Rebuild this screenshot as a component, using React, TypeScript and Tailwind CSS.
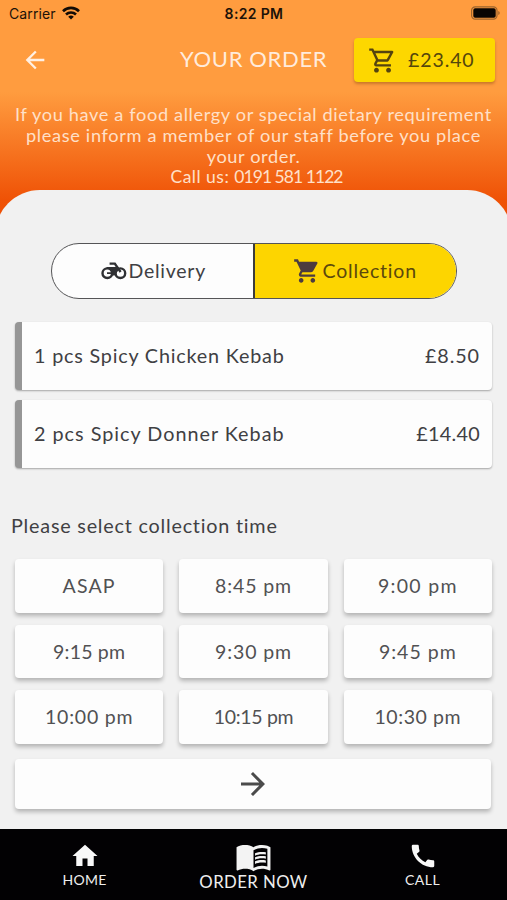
import type { ReactNode } from 'react';
import {
  MdArrowBack,
  MdArrowForward,
  MdCall,
  MdMenuBook,
  MdOutlineShoppingCart,
  MdShoppingCart,
} from 'react-icons/md';

const items = [
  { name: '1 pcs Spicy Chicken Kebab', price: '£8.50', nameSpacing: 'tracking-[0.8px]', priceSpacing: 'tracking-[0.9px]' },
  { name: '2 pcs Spicy Donner Kebab', price: '£14.40', nameSpacing: 'tracking-[1px]', priceSpacing: 'tracking-[0.3px]' },
];

const times = [
  { label: 'ASAP', spacing: 'tracking-[1.2px]' },
  { label: '8:45 pm', spacing: 'tracking-[0.9px]' },
  { label: '9:00 pm', spacing: 'tracking-[1.3px]' },
  { label: '9:15 pm', spacing: 'tracking-[0.2px]' },
  { label: '9:30 pm', spacing: 'tracking-[0.9px]' },
  { label: '9:45 pm', spacing: 'tracking-[1px]' },
  { label: '10:00 pm', spacing: 'tracking-[0.8px]' },
  { label: '10:15 pm', spacing: 'tracking-[-0.3px]' },
  { label: '10:30 pm', spacing: 'tracking-[0.6px]' },
];

function StatusBar() {
  return (
    <div className="flex h-7 items-center justify-between pr-[6px] pb-[2px] pl-[9px] font-['Inter',sans-serif] text-[14px] text-[#1c1208]">
      <div className="flex w-40 items-center gap-[6px]">
        <span className="tracking-[0.1px]">Carrier</span>
        <svg width="18" height="14" viewBox="0 0 18 14" fill="none" stroke="#120b05" strokeWidth="2.6">
          <path d="M1 5.2a11.4 11.4 0 0 1 16 0" />
          <path d="M4 8.5a7.2 7.2 0 0 1 10 0" />
          <path d="M9 13.6 6.2 10.8a4 4 0 0 1 5.6 0Z" fill="#120b05" stroke="none" />
        </svg>
      </div>
      <span className="-ml-[2px] font-semibold tracking-[0.35px]">8:22 PM</span>
      <div className="flex w-40 justify-end">
        <svg width="31" height="14" viewBox="0 0 31 14">
          <rect x="1.6" y="0.8" width="25.4" height="12.4" rx="3.6" fill="none" stroke="#9b632c" strokeWidth="1.2" />
          <rect x="3.3" y="2.3" width="22.4" height="9.4" rx="1.8" fill="#080503" />
          <path d="M28.4 5v4c1.6-.6 1.6-3.4 0-4Z" fill="#8f5a28" />
        </svg>
      </div>
    </div>
  );
}

function Motorcycle() {
  return (
    <svg width="26" height="18" viewBox="0 0 26 18" fill="none" stroke="#2f3033">
      <circle cx="6.3" cy="11.2" r="4.8" strokeWidth="2.4" />
      <circle cx="19.4" cy="11.2" r="4.8" strokeWidth="2.4" />
      <path d="M8.6 1.6h5.2l5.8 8.4" strokeWidth="2.4" />
      <path d="M5.6 5h11.2l1.4 2.2-4.6 6.4h-3.1c.4-3.6-1.2-6.4-4.9-7.4Z" fill="#2f3033" stroke="none" />
      <path d="M6 11.2h5.6" strokeWidth="1.8" />
    </svg>
  );
}

function HomeGlyph() {
  return (
    <svg width="30" height="30" viewBox="0 0 24 24" fill="#f8f8f8">
      <path d="M10 20v-6h4v6h5v-8h3L12 3 2 12h3v8z" />
    </svg>
  );
}

function NavItem({ icon, children, className }: { icon: ReactNode; children: ReactNode; className: string }) {
  return (
    <div className={`flex flex-col items-center text-[#eeeeee] ${className}`}>
      {icon}
      {children}
    </div>
  );
}

export default function App() {
  return (
    <div className="flex h-[900px] w-[507px] flex-col overflow-hidden bg-[#f1f1f1] font-['Lato',sans-serif] text-[#404043]">
      <header className="h-[240px] shrink-0 bg-[linear-gradient(180deg,#ff9c3f_0px,#ff9c3f_92px,#ef5206_200px,#ec4c02_240px)]">
        <StatusBar />
        <div className="flex h-[64px] items-center pr-3 pl-[21px]">
          <MdArrowBack size={28} color="#fff0e4" />
          <h1 className="-mt-[3px] ml-[131px] w-[160px] text-[22px] tracking-[0.65px] whitespace-nowrap text-[#ffebdc]">YOUR ORDER</h1>
          <button className="ml-auto flex h-11 w-[141px] items-center rounded-[4px] bg-[#fdd700] pl-[14px] text-[19.5px] tracking-[0.9px] text-[#55460c] shadow-[0_2px_3px_rgba(100,50,0,0.35)]">
            <MdOutlineShoppingCart size={29} color="#54430f" />
            <span className="-mt-px ml-[11px]">£23.40</span>
          </button>
        </div>
        <p className="mt-[12px] text-center text-[18.2px] leading-[20.8px] whitespace-nowrap text-[#ffe0c8]">
          <span className="tracking-[0.63px]">If you have a food allergy or special dietary requirement</span><br />
          <span className="tracking-[0.66px]">please inform a member of our staff before you place</span><br />
          <span className="tracking-[0.6px]">your order.</span><br />
          <span className="pl-[6px] text-[17.5px]">
            <span className="tracking-[0.5px]">Call us: </span>
            <span className="tracking-[-0.95px]">0191 581 1122</span>
          </span>
        </p>
      </header>

      <main className="-mx-[5px] -mt-[50px] h-[639px] shrink-0 rounded-t-[45px] bg-[#f1f1f1] px-[20px] pt-[53px]">
        <div className="mx-auto flex h-[56px] w-[406px] overflow-hidden rounded-[28px] border-[1.5px] border-[#555557] bg-[#fdfdfd] text-[19.5px]">
          <div className="flex w-[203px] items-center border-r-2 border-[#3c3c3c] pl-[49px]">
            <Motorcycle />
            <span className="ml-[2px] tracking-[0.75px]">Delivery</span>
          </div>
          <div className="flex flex-1 items-center bg-[#fdd500] pl-[38px] text-[#5b480d]">
            <MdShoppingCart size={28} color="#4c3c3f" />
            <span className="ml-[2px] tracking-[0.8px]">Collection</span>
          </div>
        </div>

        <ul className="mt-[23px] flex flex-col gap-[10px]">
          {items.map((item) => (
            <li
              key={item.name}
              className="flex h-[68px] w-[477px] items-center justify-between rounded-[4px] border-l-[7px] border-[#969696] bg-[#fdfdfd] pr-[12px] pl-[12px] text-[19.8px] shadow-[0_1px_2px_rgba(0,0,0,0.32)]"
            >
              <span className={item.nameSpacing}>{item.name}</span>
              <span className={item.priceSpacing}>{item.price}</span>
            </li>
          ))}
        </ul>

        <h2 className="mt-[43px] -ml-[4px] h-7 text-[19.8px] leading-7 tracking-[0.78px]">Please select collection time</h2>

        <div className="mt-[20px] grid w-[477px] grid-cols-3 gap-x-[16px] gap-y-[12px]">
          {times.map(({ label, spacing }) => (
            <button
              key={label}
              className={`flex h-[53.5px] items-center justify-center rounded-[4px] bg-[#fdfdfd] text-[19.5px] text-[#515153] shadow-[0_3px_4px_rgba(0,0,0,0.25)] ${spacing}`}
            >
              {label}
            </button>
          ))}
        </div>
        <button className="mt-[15px] flex h-[50px] w-[476px] items-center justify-center rounded-[4px] bg-[#fdfdfd] shadow-[0_3px_4px_rgba(0,0,0,0.25)]">
          <MdArrowForward size={36} color="#4b4b4b" />
        </button>
      </main>

      <nav className="flex h-[71px] shrink-0 bg-[#020103]">
        <NavItem className="w-[169px] pt-[12px]" icon={<HomeGlyph />}>
          <span className="text-[14px] leading-[18px] tracking-[0.3px]">HOME</span>
        </NavItem>
        <NavItem className="w-[169px] pt-[9px]" icon={<MdMenuBook size={37} color="#f3f3f3" />}>
          <span className="-mt-[3px] text-[16.8px] leading-[20px] tracking-[0.4px]">ORDER NOW</span>
        </NavItem>
        <NavItem className="w-[169px] pt-[12px]" icon={<MdCall size={30} color="#f8f8f8" />}>
          <span className="text-[14px] leading-[18px] tracking-[0.5px]">CALL</span>
        </NavItem>
      </nav>
    </div>
  );
}
